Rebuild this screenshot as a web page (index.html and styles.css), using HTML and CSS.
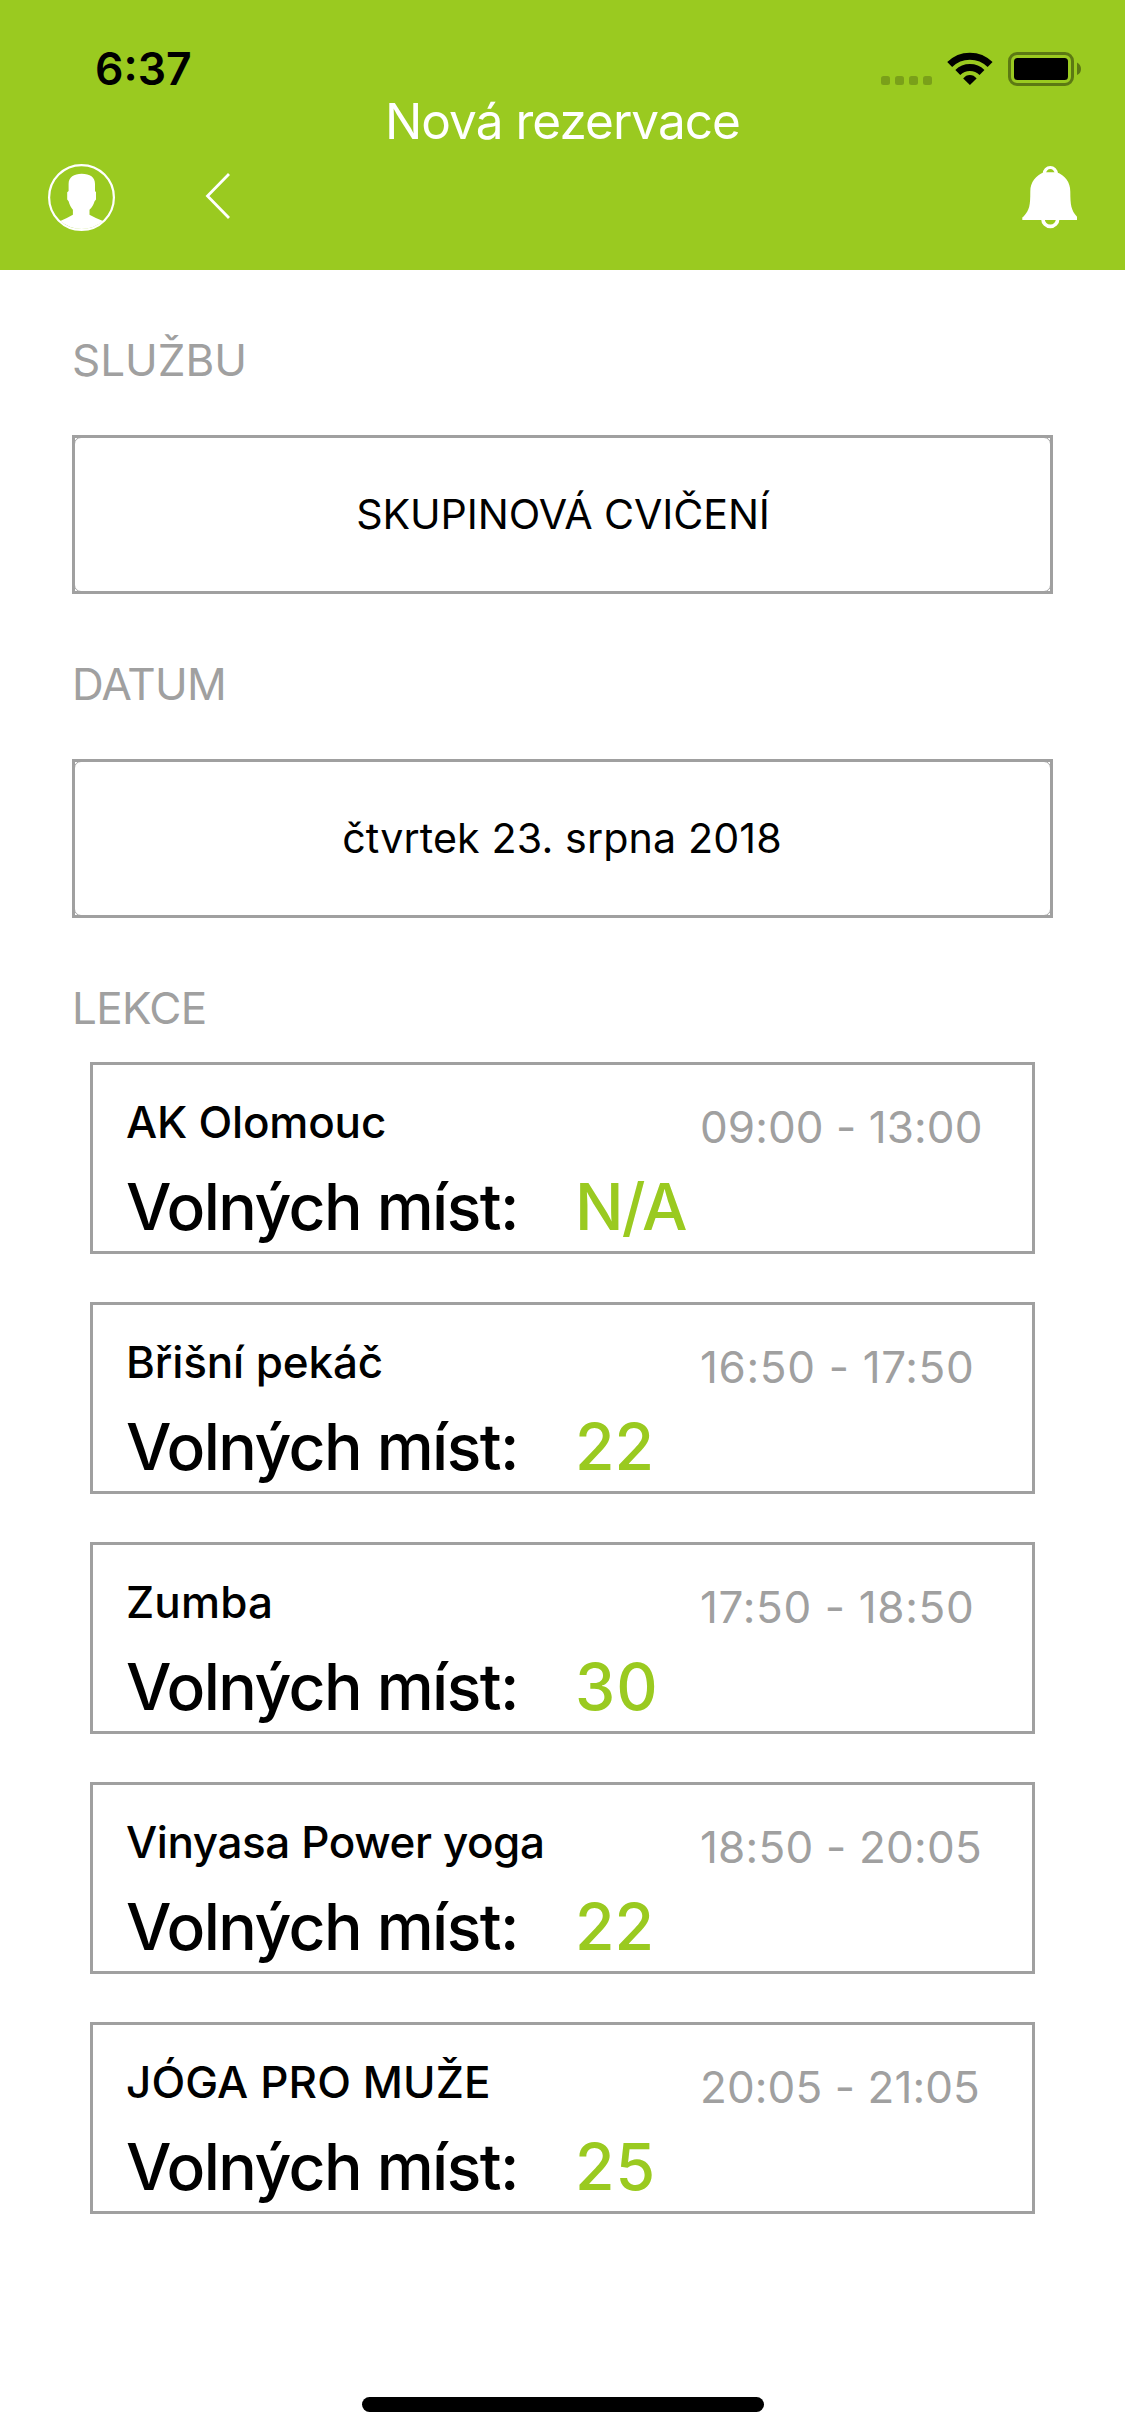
FILE: index.html
```html
<!DOCTYPE html>
<html lang="cs">
<head>
<meta charset="utf-8">
<title>Nová rezervace</title>
<link rel="stylesheet" href="styles.css">
</head>
<body>
<header class="header">
  <div class="status">
    <span class="status-time">6:37</span>
    <div class="status-icons">
      <svg width="51" height="34" viewBox="0 0 51 34" opacity=".2"><rect y="24" width="9" height="9" rx="2.5"/><rect x="14" y="24" width="9" height="9" rx="2.5"/><rect x="28" y="24" width="9" height="9" rx="2.5"/><rect x="42" y="24" width="9" height="9" rx="2.5"/></svg>
      <svg width="46" height="34" viewBox="0 0 46 34"><path d="M2.7 12.6A28.6 28.6 0 0 1 43.1 12.6M10.8 20.4A17.2 17.2 0 0 1 35 20.4" fill="none" stroke="#000" stroke-width="7"/><path d="M22.9 33 16.2 26.4Q19 23 22.9 23T29.6 26.4Z"/></svg>
      <svg width="73" height="34" viewBox="0 0 73 34"><rect x="1.5" y="1.5" width="63" height="31" rx="7.5" fill="none" stroke="#000" stroke-width="3" opacity=".4"/><rect x="6" y="6" width="54" height="22" rx="3.5"/><path d="M69 10.5Q73 12.5 73 17T69 23Z" opacity=".4"/></svg>
    </div>
  </div>
  <h1 class="title">Nová rezervace</h1>
  <nav class="nav">
    <svg class="avatar" width="68" height="68" viewBox="0 0 68 68"><circle cx="33.5" cy="33.5" r="32.4" fill="none" stroke="#fff" stroke-width="2.2"/><path fill="#fff" d="M33.7 9.7C42 9.7 47 13 47 20V27L48 28.2V35.5L46.6 37.3C45.5 41 44 43.5 41.5 45.8V50.8Q48 54.5 55 57A32.4 32.4 0 0 1 12.3 57Q18 54.8 24.9 50.8V45.8C23 43.5 21.5 41 20.6 37.3L19.2 35.5V28.2L20.6 27V20C20.6 13 26 9.7 33.7 9.7Z"/></svg>
    <svg class="back" width="26" height="46" viewBox="0 0 26 46"><path d="M24 1 2.5 23 24 45" fill="none" stroke="#fff" stroke-width="2.8"/></svg>
    <svg class="bell" width="56" height="64" viewBox="0 0 56 64"><g fill="none" stroke="#fff"><circle cx="28.3" cy="8.5" r="6" stroke-width="3.2"/><circle cx="28.3" cy="54" r="7.4" stroke-width="3.6"/></g><path fill="#fff" d="M22 7.3H34.6C43 10.5 48.3 17 48.3 26.5C48.4 40 49 45 55 51.8V55H.3V52.8Q.5 52 1.6 51.5C7.6 45 8.3 40 8.3 26.5C8.3 17 14 10.5 22 7.3Z"/></svg>
  </nav>
</header>
<main class="main">
  <h2 class="label">SLUŽBU</h2>
  <div class="field"><span class="field-text">SKUPINOVÁ CVIČENÍ</span></div>
  <h2 class="label label-date">DATUM</h2>
  <div class="field"><span class="field-text field-text-date">čtvrtek 23. srpna 2018</span></div>
  <h2 class="label label-lessons">LEKCE</h2>
  <ul class="lessons">
    <li class="lesson"><div class="lesson-head"><span class="name">AK Olomouc</span><span class="time">09:00 - 13:00</span></div><div class="lesson-spots"><span class="spots-label">Volných míst:</span><span class="spots">N/A</span></div></li>
    <li class="lesson"><div class="lesson-head"><span class="name">Břišní pekáč</span><span class="time">16:50 - 17:50</span></div><div class="lesson-spots"><span class="spots-label">Volných míst:</span><span class="spots">22</span></div></li>
    <li class="lesson"><div class="lesson-head"><span class="name">Zumba</span><span class="time">17:50 - 18:50</span></div><div class="lesson-spots"><span class="spots-label">Volných míst:</span><span class="spots">30</span></div></li>
    <li class="lesson"><div class="lesson-head"><span class="name">Vinyasa Power yoga</span><span class="time">18:50 - 20:05</span></div><div class="lesson-spots"><span class="spots-label">Volných míst:</span><span class="spots">22</span></div></li>
    <li class="lesson"><div class="lesson-head"><span class="name">JÓGA PRO MUŽE</span><span class="time">20:05 - 21:05</span></div><div class="lesson-spots"><span class="spots-label">Volných míst:</span><span class="spots">25</span></div></li>
  </ul>
</main>
<footer class="home"><div class="home-bar"></div></footer>
</body>
</html>
```
FILE: styles.css
```css
* { box-sizing: border-box; }

body {
  margin: 0;
  width: 1125px;
  height: 2436px;
  display: flex;
  flex-direction: column;
  background: #fff;
  color: #000;
  font-family: Inter, "Liberation Sans", sans-serif;
}

svg { display: block; }

h1, h2 { margin: 0; font-weight: 400; }

/* Header */
.header { height: 270px; background: #9aca20; }

.status {
  display: flex;
  justify-content: space-between;
  height: 91px;
  padding: 42px 44px 0 95px;
}
.status-time { font-size: 44.5px; font-weight: 600; line-height: 54px; }
.status-icons { display: flex; gap: 15px; padding-top: 10px; }

.title {
  color: #fff;
  font-size: 49.5px;
  line-height: 60px;
  letter-spacing: -0.98px;
  text-align: center;
}

.nav { display: flex; padding: 13px 47px 0 48px; }
.back { margin: 9px 0 0 89px; }
.bell { margin: 1px 0 0 auto; }

/* Form */
.main { flex: 1; padding: 60px 72px 0; }

.label { color: #a0a0a0; font-size: 44px; line-height: 60px; }
.label-date { letter-spacing: -0.75px; }
.label-lessons { letter-spacing: -0.7px; }

.field {
  display: flex;
  height: 159px;
  margin: 45px 0 60px;
  border: 3px solid #a0a0a0;
}
.field-text {
  display: flex;
  flex: 1;
  align-items: center;
  justify-content: center;
  margin: -1px;
  padding: 0 0 2px 1px;
  border: 1px solid #a0a0a0;
  border-radius: 7px;
  font-size: 41.2px;
  letter-spacing: -0.1px;
}
.field-text-date { padding: 0 1px 2px 0; letter-spacing: 0.12px; }

/* Lessons */
.lessons {
  display: flex;
  flex-direction: column;
  gap: 48px;
  margin: 24px 18px 0;
  padding: 0;
  list-style: none;
}
.lesson {
  height: 192px;
  padding: 32px 0 0 33px;
  border: 3px solid #a0a0a0;
}
.lesson-head { display: flex; height: 72px; font-size: 44px; line-height: 50px; }
.name { flex: 0 0 574px; font-weight: 500; }
.time { padding-top: 5px; color: #a0a0a0; letter-spacing: 0.66px; }
.lesson-spots { display: flex; font-size: 64.2px; font-weight: 500; line-height: 76px; }
.spots-label { flex: 0 0 449px; letter-spacing: -1.55px; }
.spots { color: #9aca20; }

.lesson:nth-child(1) .name { letter-spacing: -0.2px; }
.lesson:nth-child(1) .time { letter-spacing: 0.08px; }
.lesson:nth-child(1) .spots { letter-spacing: -1.85px; }
.lesson:nth-child(2) .name { letter-spacing: -0.13px; }
.lesson:nth-child(3) .name { letter-spacing: 0.16px; }
.lesson:nth-child(3) .spots { letter-spacing: 1px; }
.lesson:nth-child(4) .name { letter-spacing: -0.41px; }
.lesson:nth-child(4) .time { letter-spacing: 0.22px; }
.lesson:nth-child(5) .name { letter-spacing: 0.1px; }
.lesson:nth-child(5) .time { letter-spacing: 0.09px; }
.lesson:nth-child(5) .spots { letter-spacing: 1px; }

/* Home indicator */
.home { display: flex; justify-content: center; padding: 0 0 24px 1px; }
.home-bar { width: 402px; height: 15px; border-radius: 7.5px; background: #000; }
```
